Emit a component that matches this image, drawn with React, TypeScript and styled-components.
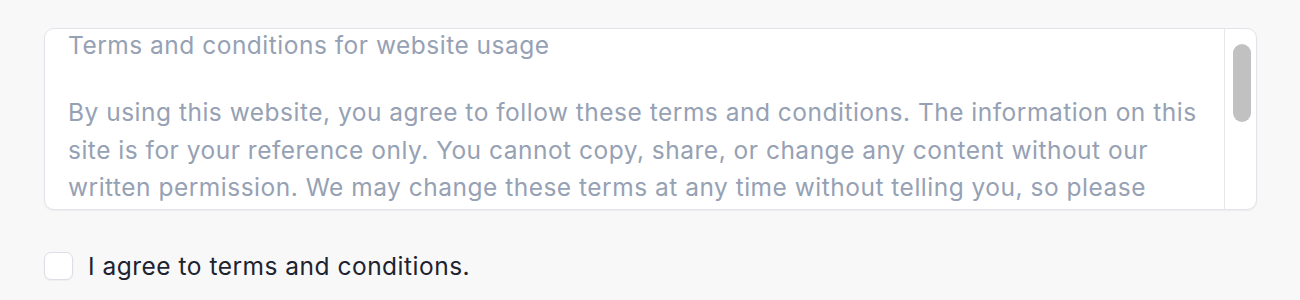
import React from "react";
import styled, { createGlobalStyle } from "styled-components";

const GlobalStyle = createGlobalStyle`
  html, body {
    margin: 0;
    padding: 0;
    background: #f8f8f8;
    font-family: Inter, "Noto Sans", sans-serif;
  }
`;

const Page = styled.div`
  padding: 28px 43px 0 44px;
  display: flex;
  flex-direction: column;
  gap: 41px;
`;

const TermsBox = styled.div`
  height: 182px;
  box-sizing: border-box;
  display: flex;
  overflow: hidden;
  background: #ffffff;
  border: 1px solid #e1e4e9;
  border-radius: 10px;
  box-shadow: 0 1px 2px rgba(15, 23, 42, 0.05);
`;

const TermsScroll = styled.div`
  flex: 1;
  min-width: 0;
  overflow: hidden;
  padding: 0 22px 0 23px;
  color: #96a1b4;
  font-size: 24.5px;
  letter-spacing: 0.5px;
`;

const ScrollTrack = styled.div`
  width: 32px;
  box-sizing: border-box;
  flex-shrink: 0;
  border-left: 1px solid #e8e8e8;
  padding: 15px 5px 0 8px;
`;

const Thumb = styled.div<{ $size: number }>`
  width: 18px;
  height: ${(p) => p.$size}px;
  border-radius: 9px;
  background: #c1c1c1;
`;

const Title = styled.div`
  line-height: 32px;
`;

const Paragraph = styled.p`
  margin: 33px 0 0;
  line-height: 37.5px;
`;

const CheckRow = styled.label`
  display: flex;
  align-items: center;
  gap: 15px;
  cursor: pointer;
`;

const Box = styled.span`
  width: 29px;
  height: 28px;
  flex-shrink: 0;
  box-sizing: border-box;
  border: 1px solid #dcdfe5;
  border-radius: 7px;
  background: #ffffff;
  box-shadow: 0 1px 2px rgba(15, 23, 42, 0.05);
`;

const Label = styled.span`
  font-size: 24.5px;
  letter-spacing: 0.5px;
  color: #1d2330;
`;

export default function App() {
  return (
    <>
      <GlobalStyle />
      <Page>
        <TermsBox>
          <TermsScroll>
            <Title>Terms and conditions for website usage</Title>
            <Paragraph>
              By using this website, you agree to follow these terms and conditions. The
              information on this site is for your reference only. You cannot copy, share, or
              change any content without our written permission. We may change these terms at
              any time without telling you, so please check this page regularly.
            </Paragraph>
          </TermsScroll>
          <ScrollTrack>
            <Thumb $size={78} />
          </ScrollTrack>
        </TermsBox>
        <CheckRow>
          <Box />
          <Label>I agree to terms and conditions.</Label>
        </CheckRow>
      </Page>
    </>
  );
}
